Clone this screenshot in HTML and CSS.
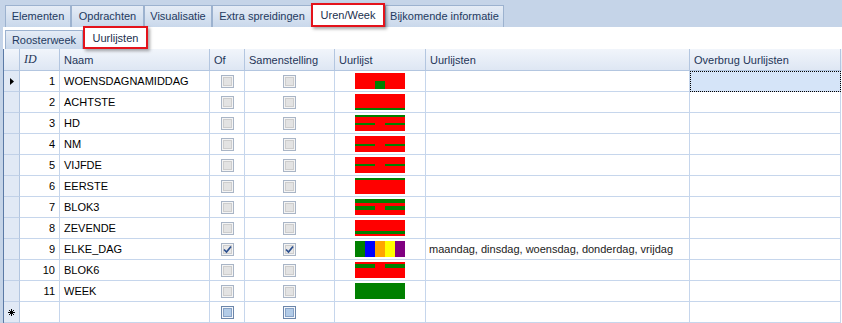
FILE: index.html
```html
<!DOCTYPE html>
<html lang="nl">

<head>
    <meta charset="UTF-8">
    <title>Uren/Week - Uurlijsten</title>
    <link rel="stylesheet" href="styles.css">
</head>

<body>
    <div class="tabs main-tabs">
        <div class="tab tab-elementen">Elementen</div>
        <div class="tab tab-opdrachten">Opdrachten</div>
        <div class="tab tab-visualisatie">Visualisatie</div>
        <div class="tab tab-extra">Extra spreidingen</div>
        <div class="tab tab-uren active">Uren/Week</div>
        <div class="tab tab-bijkomende">Bijkomende informatie</div>
    </div>

    <div class="page">
        <div class="tabs sub-tabs">
            <div class="tab tab-rooster">Roosterweek</div>
            <div class="tab tab-uurlijsten active">Uurlijsten</div>
        </div>

        <div class="grid">
            <div class="row head">
                <div class="cell ind"></div>
                <div class="cell id-head">ID</div>
                <div class="cell">Naam</div>
                <div class="cell">Of</div>
                <div class="cell">Samenstelling</div>
                <div class="cell">Uurlijst</div>
                <div class="cell">Uurlijsten</div>
                <div class="cell">Overbrug Uurlijsten</div>
            </div>

            <div class="row">
                <div class="cell ind">
                    <svg width="4" height="7"><polygon points="0,0 4,3.5 0,7" fill="#000"/></svg>
                </div>
                <div class="cell num">1</div>
                <div class="cell">WOENSDAGNAMIDDAG</div>
                <div class="cell chk"><span class="box"></span></div>
                <div class="cell chk"><span class="box"></span></div>
                <div class="cell bar">
                    <svg width="50" height="16"><rect width="50" height="16" fill="#f00"/><rect x="20" y="8" width="10" height="8" fill="#008000"/></svg>
                </div>
                <div class="cell"></div>
                <div class="cell focus"></div>
            </div>

            <div class="row">
                <div class="cell ind"></div>
                <div class="cell num">2</div>
                <div class="cell">ACHTSTE</div>
                <div class="cell chk"><span class="box"></span></div>
                <div class="cell chk"><span class="box"></span></div>
                <div class="cell bar">
                    <svg width="50" height="16"><rect width="50" height="16" fill="#f00"/><rect y="14" width="50" height="2" fill="#008000"/></svg>
                </div>
                <div class="cell"></div>
                <div class="cell"></div>
            </div>

            <div class="row">
                <div class="cell ind"></div>
                <div class="cell num">3</div>
                <div class="cell">HD</div>
                <div class="cell chk"><span class="box"></span></div>
                <div class="cell chk"><span class="box"></span></div>
                <div class="cell bar">
                    <svg width="50" height="16"><rect width="50" height="16" fill="#f00"/><rect width="50" height="2" fill="#008000"/><rect y="8" width="20" height="2" fill="#008000"/><rect x="30" y="8" width="20" height="2" fill="#008000"/></svg>
                </div>
                <div class="cell"></div>
                <div class="cell"></div>
            </div>

            <div class="row">
                <div class="cell ind"></div>
                <div class="cell num">4</div>
                <div class="cell">NM</div>
                <div class="cell chk"><span class="box"></span></div>
                <div class="cell chk"><span class="box"></span></div>
                <div class="cell bar">
                    <svg width="50" height="16"><rect width="50" height="16" fill="#f00"/><rect y="8" width="20" height="2" fill="#008000"/><rect x="30" y="8" width="20" height="2" fill="#008000"/></svg>
                </div>
                <div class="cell"></div>
                <div class="cell"></div>
            </div>

            <div class="row">
                <div class="cell ind"></div>
                <div class="cell num">5</div>
                <div class="cell">VIJFDE</div>
                <div class="cell chk"><span class="box"></span></div>
                <div class="cell chk"><span class="box"></span></div>
                <div class="cell bar">
                    <svg width="50" height="16"><rect width="50" height="16" fill="#f00"/><rect y="7" width="20" height="2" fill="#008000"/><rect x="30" y="7" width="20" height="2" fill="#008000"/></svg>
                </div>
                <div class="cell"></div>
                <div class="cell"></div>
            </div>

            <div class="row">
                <div class="cell ind"></div>
                <div class="cell num">6</div>
                <div class="cell">EERSTE</div>
                <div class="cell chk"><span class="box"></span></div>
                <div class="cell chk"><span class="box"></span></div>
                <div class="cell bar">
                    <svg width="50" height="16"><rect width="50" height="16" fill="#f00"/><rect width="50" height="2" fill="#008000"/></svg>
                </div>
                <div class="cell"></div>
                <div class="cell"></div>
            </div>

            <div class="row">
                <div class="cell ind"></div>
                <div class="cell num">7</div>
                <div class="cell">BLOK3</div>
                <div class="cell chk"><span class="box"></span></div>
                <div class="cell chk"><span class="box"></span></div>
                <div class="cell bar">
                    <svg width="50" height="16"><rect width="50" height="16" fill="#f00"/><rect width="50" height="4" fill="#008000"/><rect y="7" width="20" height="4" fill="#008000"/><rect x="30" y="7" width="20" height="4" fill="#008000"/></svg>
                </div>
                <div class="cell"></div>
                <div class="cell"></div>
            </div>

            <div class="row">
                <div class="cell ind"></div>
                <div class="cell num">8</div>
                <div class="cell">ZEVENDE</div>
                <div class="cell chk"><span class="box"></span></div>
                <div class="cell chk"><span class="box"></span></div>
                <div class="cell bar">
                    <svg width="50" height="16"><rect width="50" height="16" fill="#f00"/><rect y="11" width="50" height="3" fill="#008000"/></svg>
                </div>
                <div class="cell"></div>
                <div class="cell"></div>
            </div>

            <div class="row">
                <div class="cell ind"></div>
                <div class="cell num">9</div>
                <div class="cell">ELKE_DAG</div>
                <div class="cell chk"><span class="box checked"><svg width="11" height="11"><polyline points="2,5.5 4.5,8 9,2.5" fill="none" stroke="#2b4f8e" stroke-width="1.7"/></svg></span></div>
                <div class="cell chk"><span class="box checked"><svg width="11" height="11"><polyline points="2,5.5 4.5,8 9,2.5" fill="none" stroke="#2b4f8e" stroke-width="1.7"/></svg></span></div>
                <div class="cell bar">
                    <svg width="50" height="16"><rect width="10" height="16" fill="#008000"/><rect x="10" width="10" height="16" fill="#0000ff"/><rect x="20" width="10" height="16" fill="#ffa500"/><rect x="30" width="10" height="16" fill="#ffff00"/><rect x="40" width="10" height="16" fill="#800080"/></svg>
                </div>
                <div class="cell days">maandag, dinsdag, woensdag, donderdag, vrijdag</div>
                <div class="cell"></div>
            </div>

            <div class="row">
                <div class="cell ind"></div>
                <div class="cell num">10</div>
                <div class="cell">BLOK6</div>
                <div class="cell chk"><span class="box"></span></div>
                <div class="cell chk"><span class="box"></span></div>
                <div class="cell bar">
                    <svg width="50" height="16"><rect width="50" height="16" fill="#f00"/><rect y="2" width="20" height="4" fill="#008000"/><rect x="30" y="2" width="20" height="4" fill="#008000"/></svg>
                </div>
                <div class="cell"></div>
                <div class="cell"></div>
            </div>

            <div class="row">
                <div class="cell ind"></div>
                <div class="cell num">11</div>
                <div class="cell">WEEK</div>
                <div class="cell chk"><span class="box"></span></div>
                <div class="cell chk"><span class="box"></span></div>
                <div class="cell bar">
                    <svg width="50" height="16"><rect width="50" height="16" fill="#008000"/></svg>
                </div>
                <div class="cell"></div>
                <div class="cell"></div>
            </div>

            <div class="row">
                <div class="cell ind">
                    <svg width="7" height="7"><g stroke="#000" stroke-width="1"><line x1="3.5" y1="0" x2="3.5" y2="7"/><line x1="0" y1="3.5" x2="7" y2="3.5"/><line x1="1" y1="1" x2="6" y2="6"/><line x1="6" y1="1" x2="1" y2="6"/></g></svg>
                </div>
                <div class="cell num"></div>
                <div class="cell"></div>
                <div class="cell chk"><span class="box new"></span></div>
                <div class="cell chk"><span class="box new"></span></div>
                <div class="cell bar"></div>
                <div class="cell"></div>
                <div class="cell"></div>
            </div>
        </div>
    </div>
</body>

</html>
```

FILE: styles.css
```css
body {
    margin: 0;
    background-color: #c5d4e8;
    font-family: "Liberation Sans", Arial, sans-serif;
    font-size: 11px;
    color: #000;
}

/* tab strips */
.tabs {
    display: flex;
}

.main-tabs {
    padding: 5px 0 0 5px;
    height: 22px;
    align-items: flex-end;
}

.tab {
    box-sizing: border-box;
    height: 22px;
    line-height: 20px;
    text-align: center;
    border: 1px solid #9cb2cf;
    border-bottom: none;
    background: linear-gradient(#e5ecf6, #c9d8eb);
    color: #1f3a60;
    white-space: nowrap;
}

.tab-elementen { width: 66px; }
.tab-opdrachten { width: 73px; }
.tab-visualisatie { width: 68px; }
.tab-extra { width: 100px; }
.tab-uren { width: 74px; }
.tab-bijkomende { width: 119px; }
.tab-rooster { width: 78px; }
.tab-uurlijsten { width: 65px; }

.tab.active {
    background: #fff;
    color: #1a2f4d;
    outline: 2px solid #e4131b;
    outline-offset: -2px;
    box-shadow: 2px 2px 3px rgba(0, 0, 0, 0.35);
    position: relative;
    z-index: 1;
}

.main-tabs .tab.active {
    height: 24px;
    line-height: 23px;
    margin-left: -1px;
}

.page {
    background-color: #fff;
    margin-left: 3px;
}

.sub-tabs {
    height: 22px;
    padding-left: 2px;
    align-items: flex-end;
}

.sub-tabs .tab {
    height: 19px;
    line-height: 18px;
}

.sub-tabs .tab.active {
    height: 23px;
    line-height: 22px;
}

/* grid */
.grid {
    border-left: 1px solid #5b7aa6;
}

.row {
    display: grid;
    grid-template-columns: 16px 40px 150px 35px 90px 91px 264px 151px;
    height: 21px;
}

.cell {
    box-sizing: border-box;
    display: flex;
    align-items: center;
    padding: 0 4px;
    border-right: 1px solid #c6d6ec;
    border-bottom: 1px solid #c6d6ec;
    white-space: nowrap;
    overflow: hidden;
}

.head {
    height: 22px;
    background: linear-gradient(#f1f5fb, #dde6f3);
}

.head .cell {
    border-right-color: #b3c6e0;
    border-bottom-color: #b3c6e0;
    color: #1e3557;
}

.id-head {
    font-family: "Liberation Serif", serif;
    font-style: italic;
    font-size: 12px;
}

.ind {
    padding: 0;
    justify-content: center;
    background-color: #e1e9f5;
    border-right-color: #b3c6e0;
    border-bottom-color: #c1d1e8;
}

.head .ind {
    background: none;
}

.num {
    justify-content: flex-end;
}

.chk,
.bar {
    justify-content: center;
    padding: 0;
}

.days {
    color: #222;
    padding-left: 3px;
}

.focus {
    background-color: #d5e4f8;
    outline: 1px dotted #000;
    outline-offset: -1px;
}

/* check boxes */
.box {
    box-sizing: border-box;
    display: flex;
    align-items: center;
    justify-content: center;
    width: 13px;
    height: 13px;
    border: 1px solid #a9b5c6;
    background-color: #e3e3e3;
    box-shadow: inset 0 0 0 1px #f4f4f4, inset 0 0 0 2px #cdcdcd;
}

.box.checked {
    background-color: #e8e8e8;
}

.box.new {
    border-color: #6c86aa;
    background-color: #b2cbe7;
    box-shadow: inset 0 0 0 1px #f4f7fb, inset 0 0 0 2px #87a2c6;
}
```
